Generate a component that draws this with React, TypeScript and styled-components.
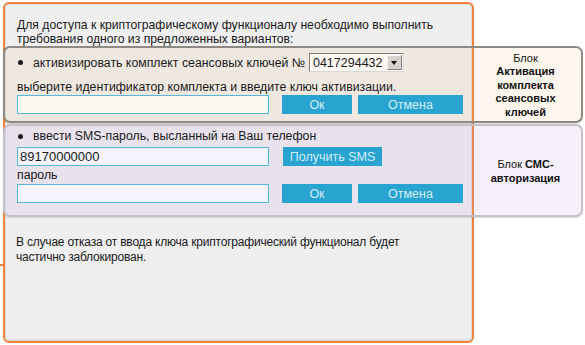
import React from "react";
import styled, { createGlobalStyle } from "styled-components";

const GlobalStyle = createGlobalStyle`
  html, body {
    margin: 0;
    padding: 0;
    background: #ffffff;
  }
  body {
    font-family: "Liberation Sans", Arial, sans-serif;
    color: #1a1a1a;
  }
`;

const Page = styled("div")`
  width: 585px;
  height: 345px;
  box-sizing: border-box;
  padding: 2px 0 0 3px;
  overflow: hidden;
`;

const Panel = styled("div")`
  position: relative;
  width: 471px;
  height: 341px;
  box-sizing: border-box;
  border: 2px solid #f4843c;
  border-radius: 6px;
  background: #efefef;
  box-shadow: inset 0 0 0 1px #dcdcdc, inset 0 -2px 0 #e0e0e0;

  &::before {
    content: "";
    position: absolute;
    left: -5px;
    top: 260px;
    width: 3px;
    height: 2px;
    background: #f4843c;
  }
`;

const Intro = styled("p")`
  margin: 0;
  padding: 14px 0 0 12px;
  font-size: 12.2px;
  line-height: 14px;
`;

const Block = styled("section")<{ $kind: "keys" | "sms" }>`
  display: flex;
  width: 580px;
  box-sizing: border-box;
  margin: ${(p) => (p.$kind === "keys" ? "0" : "1px")} 0 0 -2px;
  border: 2px solid ${(p) => (p.$kind === "keys" ? "#8f8984" : "#c6c0cb")};
  border-radius: 7px;
  background: ${(p) =>
    p.$kind === "keys"
      ? "rgba(239, 183, 127, 0.125)"
      : "rgba(191, 148, 226, 0.14)"};
  box-shadow: 0 1px 1px rgba(0, 0, 0, 0.12);
`;

const Body = styled("div")<{ $top: number; $bottom: number }>`
  width: 471px;
  box-sizing: border-box;
  padding: ${(p) => `${p.$top}px 0 ${p.$bottom}px 12px`};
  display: flex;
  flex-direction: column;
`;

const Note = styled("div")`
  flex: 1;
  display: flex;
  flex-direction: column;
  align-items: center;
  justify-content: center;
  text-align: center;
  font-size: 11px;
  line-height: 13.5px;
  color: #111;
  padding: 2px 6px 0 0;

  & b {
    font-weight: 700;
  }
`;

const Row = styled("div")<{ $gap?: number; $mt?: number }>`
  display: flex;
  align-items: center;
  gap: ${(p) => p.$gap ?? 13}px;
  margin-top: ${(p) => p.$mt ?? 0}px;
`;

const Bullet = styled("div")`
  display: flex;
  align-items: center;
  font-size: 12.3px;
  line-height: 14px;
  padding-left: 1px;

  &::before {
    content: "";
    width: 5px;
    height: 5px;
    border-radius: 50%;
    background: #1a1a1a;
    margin: 0 10px 0 0;
  }
`;

const Text = styled("div")<{ $mt?: number }>`
  font-size: 12.3px;
  line-height: 14px;
  margin-top: ${(p) => p.$mt ?? 0}px;
`;

const Field = styled("input")<{ $tint: string }>`
  width: 252px;
  height: 19px;
  box-sizing: border-box;
  border: 1px solid #56b8da;
  background: ${(p) => p.$tint};
  font-family: "Liberation Sans", Arial, sans-serif;
  font-size: 13px;
  color: #1a1a1a;
  padding: 0 2px;
  outline: none;
`;

const Buttons = styled("div")`
  display: flex;
  gap: 6px;
`;

const Button = styled("button")<{ $w: number }>`
  width: ${(p) => p.$w}px;
  height: 19px;
  border: 0;
  padding: 0;
  background: #29a3cf;
  color: #d3edf7;
  font-family: "Liberation Sans", Arial, sans-serif;
  font-size: 12.5px;
  cursor: pointer;
`;

const Select = styled("div")`
  display: flex;
  align-items: center;
  justify-content: space-between;
  width: 95px;
  height: 19px;
  box-sizing: border-box;
  margin-left: 4px;
  border: 1px solid #7c7c7c;
  border-right-color: #d8d8d8;
  border-bottom-color: #d8d8d8;
  background: #fdf8f2;
  padding: 0 1px 0 3px;
  font-size: 12.5px;
`;

const Arrow = styled("span")`
  width: 15px;
  height: 15px;
  box-sizing: border-box;
  background: #d6d3cd;
  border: 1px solid #f4f4f4;
  border-right-color: #808080;
  border-bottom-color: #808080;
  display: flex;
  align-items: center;
  justify-content: center;

  &::after {
    content: "";
    border-left: 3.5px solid transparent;
    border-right: 3.5px solid transparent;
    border-top: 4px solid #111;
  }
`;

const Footer = styled("p")`
  margin: 18px 0 0;
  padding-left: 11px;
  font-size: 12px;
  line-height: 15px;
  letter-spacing: -0.2px;
`;

export default function App() {
  return (
    <>
      <GlobalStyle />
      <Page>
        <Panel>
          <Intro>
            Для доступа к криптографическому функционалу необходимо выполнить
            <br />
            требования одного из предложенных вариантов:
          </Intro>

          <Block $kind="keys">
            <Body $top={5} $bottom={7}>
              <Row $gap={0}>
                <Bullet>активизировать комплект сеансовых ключей №</Bullet>
                <Select>
                  0417294432
                  <Arrow />
                </Select>
              </Row>
              <Text $mt={8}>
                выберите идентификатор комплекта и введите ключ активизации.
              </Text>
              <Row $mt={1}>
                <Field $tint="#fdf8f2" />
                <Buttons>
                  <Button $w={70}>Ок</Button>
                  <Button $w={105}>Отмена</Button>
                </Buttons>
              </Row>
            </Body>
            <Note>
              <span>Блок</span>
              <b>Активация</b>
              <b>комплекта</b>
              <b>сеансовых</b>
              <b>ключей</b>
            </Note>
          </Block>

          <Block $kind="sms">
            <Body $top={3} $bottom={12}>
              <Bullet>ввести SMS-пароль, высланный на Ваш телефон</Bullet>
              <Row $mt={4} $gap={14}>
                <Field $tint="#f7f4fd" defaultValue="89170000000" />
                <Button $w={99}>Получить SMS</Button>
              </Row>
              <Text $mt={2}>пароль</Text>
              <Row $mt={2}>
                <Field $tint="#f7f4fd" />
                <Buttons>
                  <Button $w={70}>Ок</Button>
                  <Button $w={105}>Отмена</Button>
                </Buttons>
              </Row>
            </Body>
            <Note>
              <span>
                Блок <b>СМС-</b>
              </span>
              <b>авторизация</b>
            </Note>
          </Block>

          <Footer>
            В случае отказа от ввода ключа криптографический функционал будет
            <br />
            частично заблокирован.
          </Footer>
        </Panel>
      </Page>
    </>
  );
}
